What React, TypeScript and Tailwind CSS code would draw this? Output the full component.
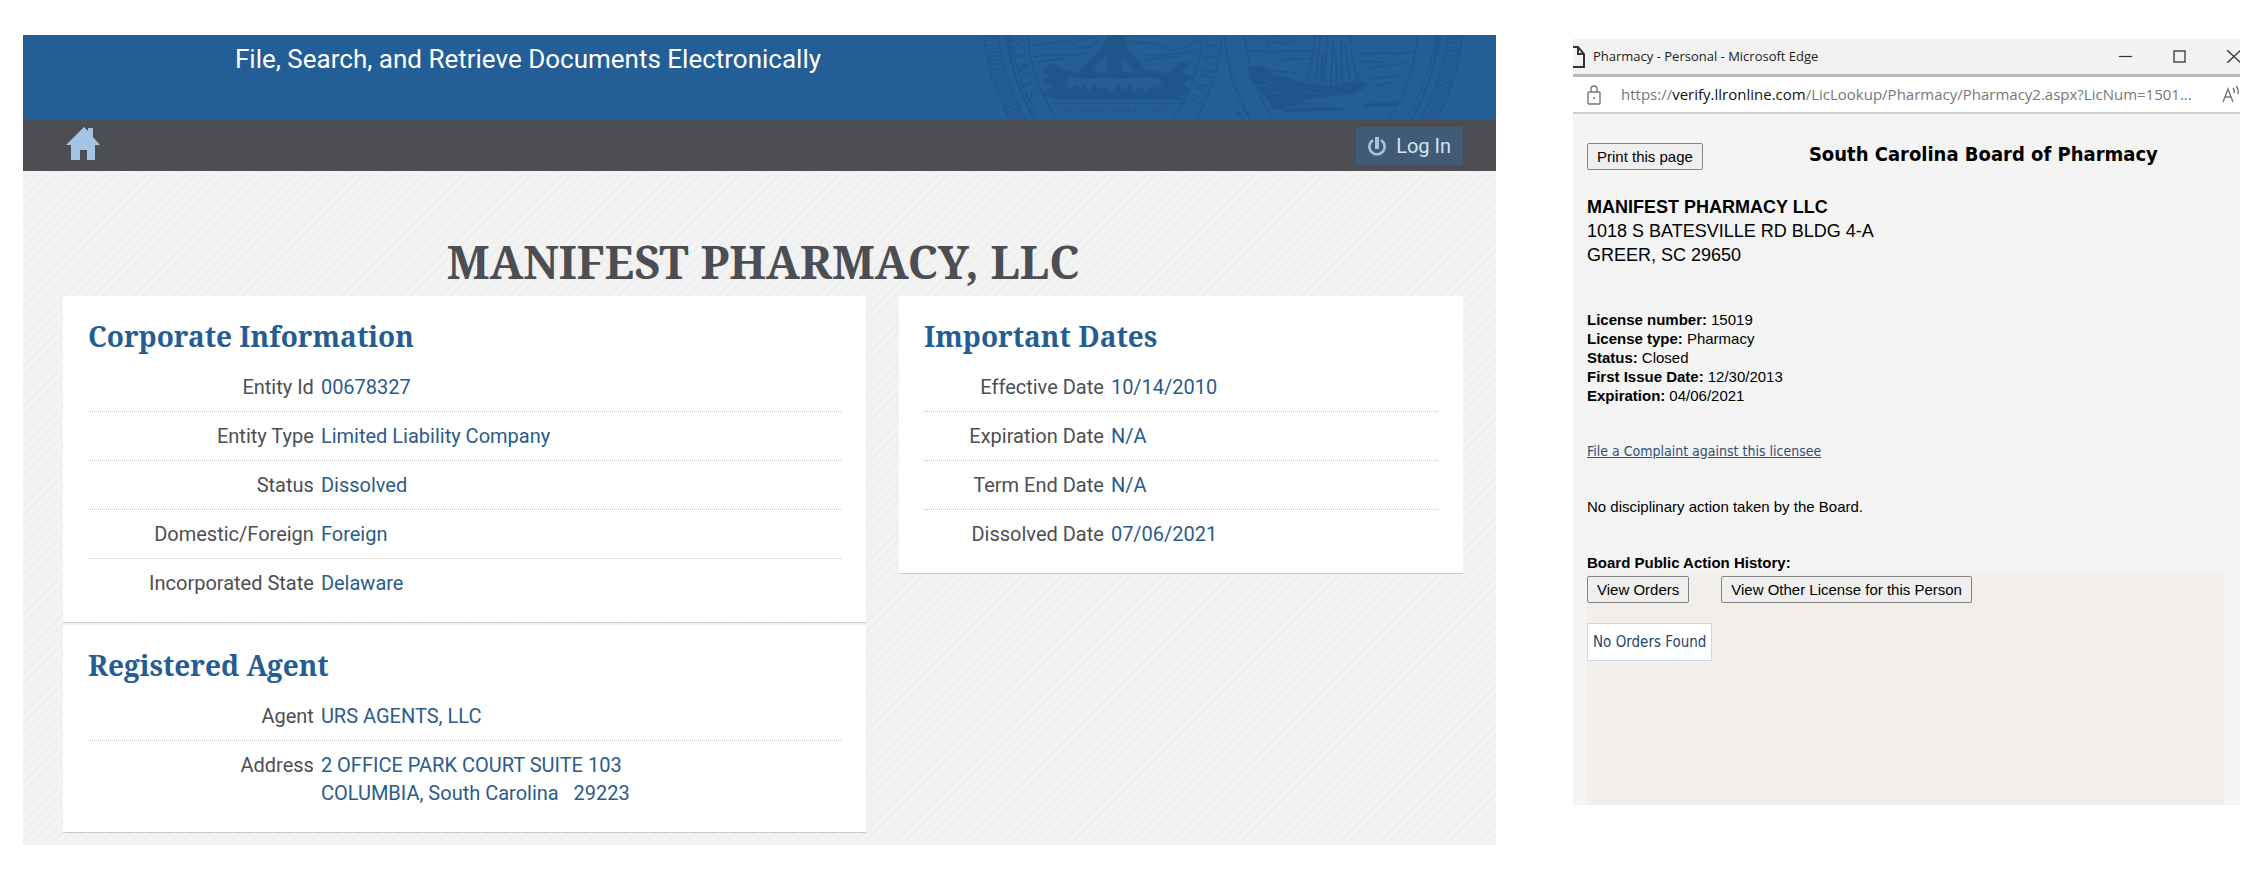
type Field = { label: string; lines: string[] }

const corporateInfo: Field[] = [
  { label: "Entity Id", lines: ["00678327"] },
  { label: "Entity Type", lines: ["Limited Liability Company"] },
  { label: "Status", lines: ["Dissolved"] },
  { label: "Domestic/Foreign", lines: ["Foreign"] },
  { label: "Incorporated State", lines: ["Delaware"] },
]

const registeredAgent: Field[] = [
  { label: "Agent", lines: ["URS AGENTS, LLC"] },
  { label: "Address", lines: ["2 OFFICE PARK COURT SUITE 103", "COLUMBIA, South Carolina \u00a0 29223"] },
]

const importantDates: Field[] = [
  { label: "Effective Date", lines: ["10/14/2010"] },
  { label: "Expiration Date", lines: ["N/A"] },
  { label: "Term End Date", lines: ["N/A"] },
  { label: "Dissolved Date", lines: ["07/06/2021"] },
]

const license = [
  { label: "License number:", value: "15019" },
  { label: "License type:", value: "Pharmacy" },
  { label: "Status:", value: "Closed" },
  { label: "First Issue Date:", value: "12/30/2013" },
  { label: "Expiration:", value: "04/06/2021" },
]

function StateSeal() {
  return (
    <svg viewBox="0 0 486 84" className="absolute right-[30px] top-0 h-[84px] w-[486px]" fill="none" stroke="#1f558a" strokeWidth="1.3" aria-hidden="true">
      {/* outer ring */}
      <circle cx="243" cy="-28" r="241" />
      <circle cx="243" cy="-28" r="234" strokeWidth="11" strokeDasharray="1.5 2.5" opacity="0.75" />
      <circle cx="243" cy="-28" r="227" />
      <circle cx="243" cy="-28" r="219" />
      <circle cx="243" cy="-28" r="215" strokeWidth="1" />

      {/* palmetto oval */}
      <ellipse cx="135" cy="-15" rx="107" ry="150" />
      <ellipse cx="135" cy="-15" rx="88" ry="131" />
      <path id="motto" stroke="none" d="M31 -15 A104 147 0 0 0 239 -15" />
      <g fill="#1f558a" stroke="none" fontFamily="Liberation Serif, serif">
        <text fontSize="17">
          <textPath href="#motto" startOffset="18">N I M I S</textPath>
        </text>
        <text fontSize="17">
          <textPath href="#motto" startOffset="308">P A R A T</textPath>
        </text>
        <text x="135" y="78" fontSize="8" textAnchor="middle">MELIOREM LAPSA LOCAVIT</text>
        <path d="M128 0 L144 0 L148 14 L166 36 L154 37 L143 22 L143 40 L126 40 L127 20 L110 37 L98 37 L121 13 Z" />
        <path d="M62 36 L72 28 L84 34 L98 38 L112 35 L126 39 L142 36 L158 39 L172 35 L188 39 L200 27 L209 28 L201 38 L214 42 L203 49 L212 55 L201 61 L203 65 L76 65 L62 59 L72 52 L60 47 L70 42 Z M90 42 L86 48 L90 54 L96 50 L100 55 L105 49 L109 56 L114 50 L120 55 L126 51 L132 57 L138 50 L143 56 L149 50 L154 56 L160 51 L166 56 L172 50 L178 54 L182 48 L178 43 L160 42 L146 44 L128 42 L108 44 Z" fillRule="evenodd" />
      </g>
      <path d="M52 10 C68 13 78 1 94 9 S112 10 118 6 M54 22 C76 16 88 24 108 18 M58 27 L86 23 M150 5 C164 12 172 4 184 12 S206 12 218 4 M160 18 C180 26 196 14 216 18 M166 25 L198 21 M70 68 H206" />
      <path d="M144 1 L178 1 M146 5 L160 9 M96 5 L117 2" />

      {/* woman with laurel oval */}
      <ellipse cx="351" cy="-15" rx="107" ry="150" />
      <ellipse cx="351" cy="-15" rx="87" ry="131" />
      <g fill="#1f558a" stroke="none">
        <path d="M267 32 L282 31 L293 40 L310 43 L328 49 L350 52 L374 45 L389 50 L376 58 L346 62 L318 66 L336 69 L306 72 L294 75 L284 60 L272 47 Z" />
        <path d="M385 69 L416 66 L421 70 L402 72 L382 72 Z" />
        <path d="M300 73 L366 72 L360 76 L304 77 Z" />
      </g>
      <path fill="#245e96" d="M334 0 C334 18 331 34 327 45 L340 50 L354 52 L368 48 L379 46 C374 34 370 18 371 0 Z" />
      <path d="M340 0 L336 44 M347 1 L344 47 M353 8 L351 50 M361 6 L362 48 M365 8 L370 44 M343 18 L341 44 M356 20 L357 50" strokeWidth="2" />
      <path d="M267 8 C270 1 282 0 289 8 L289 14 M268 16 H332 M286 19 L302 17 M300 26 C312 20 322 28 332 22 M276 34 L318 38 M290 7 C300 5 306 14 314 4 M292 0 L308 8 M376 18 C388 22 400 15 412 18 S428 15 434 16 M378 29 C390 22 398 31 406 26 M384 34 L424 28 M390 44 L422 40 M396 51 L414 47" />
      <path d="M280 43 L296 50 M276 50 L292 52 M288 60 L304 56 M306 52 L318 58 M322 56 L340 59" stroke="#245e96" />
      <path d="M263 74 L270 84 M257 76 L264 84" strokeWidth="2" />
    </svg>
  )
}

function HomeIcon() {
  return (
    <svg viewBox="0 0 34 33" className="h-[33px] w-[34px]" fill="#a3c4e3" aria-hidden="true">
      <path d="M0 18 L18 0 L22 4 V1 H27 V10 L34 18 H29 V33 H21 V23 H14 V33 H5 V18 Z" />
    </svg>
  )
}

function PowerIcon() {
  return (
    <svg viewBox="0 0 18 19" className="h-[19px] w-[18px]" fill="none" stroke="#a3c4e3" aria-hidden="true">
      <path d="M5 3.2 A7.6 7.6 0 1 0 13 3.2" strokeWidth="2.6" />
      <path d="M9 0 V12" strokeWidth="4" />
    </svg>
  )
}

function InfoCard({ title, fields, wide = false }: { title: string; fields: Field[]; wide?: boolean }) {
  return (
    <section className="border-b border-[#c9c9c9] bg-white px-[25px] pt-5 pb-[15px]">
      <h2 className="mb-[7px] font-['Noto_Serif',serif] text-[28px] leading-10 font-bold text-[#255d93]">{title}</h2>
      <dl>
        {fields.map((field) => (
          <div key={field.label} className="flex gap-[7px] border-b border-dotted border-[#c4c4c4] py-[10px] text-xl leading-7 last:border-b-0">
            <dt className={wide ? "w-[30%] shrink-0 text-right text-[#4d4e53]" : "w-[35%] shrink-0 text-right text-[#4d4e53]"}>{field.label}</dt>
            <dd className="text-[#2b5b8a]">
              {field.lines.map((line) => (
                <span key={line} className="block">{line}</span>
              ))}
            </dd>
          </div>
        ))}
      </dl>
    </section>
  )
}

function FilingPanel() {
  return (
    <div className="self-start font-['Roboto',sans-serif]">
      <header className="relative overflow-hidden bg-[#245e96] pt-[6px] pb-[43px] pl-[212px]">
        <StateSeal />
        <p className="relative text-[26px] leading-9 text-white">File, Search, and Retrieve Documents Electronically</p>
      </header>
      <nav className="flex items-start justify-between bg-[#4d4e53] pt-[7px] pr-[33px] pb-[6px] pl-[43px]">
        <a href="#home" aria-label="Home"><HomeIcon /></a>
        <button className="flex h-[38px] items-center gap-[10px] bg-[#415b76] px-3 text-xl text-[#d3e3f2]">
          <PowerIcon />
          Log In
        </button>
      </nav>
      <main className="bg-[repeating-linear-gradient(135deg,#f3f3f3_0px,#f3f3f3_4px,#eeeeee_5px,#eeeeee_6px,#f3f3f3_7px)] pt-[57px] pr-[33px] pb-3 pl-10">
        <h1 className="text-center font-['Noto_Serif',serif] text-[45px] leading-[68px] font-bold text-[#4d4e53]">MANIFEST PHARMACY, LLC</h1>
        <div className="grid grid-cols-[803fr_564fr] items-start gap-[33px]">
          <div className="flex flex-col gap-[2px]">
            <InfoCard title="Corporate Information" fields={corporateInfo} wide />
            <InfoCard title="Registered Agent" fields={registeredAgent} wide />
          </div>
          <InfoCard title="Important Dates" fields={importantDates} />
        </div>
      </main>
    </div>
  )
}

function TitleBar() {
  return (
    <div className="flex h-[38px] items-center overflow-hidden border-b-[3px] border-[#bababa] bg-[#f2f2f2]">
      <svg viewBox="0 0 12 22" className="h-[22px] w-3" fill="none" stroke="#333" strokeWidth="2" aria-hidden="true">
        <path d="M0 1 H5 L11 8 V21 H0 M5 1 V8 H11" />
      </svg>
      <p className="ml-2 grow font-['Open_Sans',sans-serif] text-[13px] text-[#222]">Pharmacy - Personal - Microsoft Edge</p>
      <div className="flex items-center gap-[41px]">
        <button aria-label="Minimize">
          <svg viewBox="0 0 13 13" className="size-[13px]" stroke="#333" strokeWidth="1.2" aria-hidden="true"><path d="M0 6.5 H13" /></svg>
        </button>
        <button aria-label="Maximize">
          <svg viewBox="0 0 13 13" className="size-[13px]" fill="none" stroke="#333" strokeWidth="1.3" aria-hidden="true"><rect x="1" y="1" width="11" height="11" /></svg>
        </button>
        <button aria-label="Close">
          <svg viewBox="0 0 13 13" className="size-[13px]" stroke="#333" strokeWidth="1.3" aria-hidden="true"><path d="M0 0 L14 13 M14 0 L0 13" /></svg>
        </button>
      </div>
    </div>
  )
}

function AddressBar() {
  return (
    <div className="flex h-[37px] items-center overflow-hidden border-b-2 border-[#cfcfcf] bg-white pl-[14px] text-[#777]">
      <svg viewBox="0 0 14 20" className="h-5 w-[14px] shrink-0" fill="none" stroke="#777" strokeWidth="1.4" aria-hidden="true">
        <rect x="1" y="7" width="12" height="12" rx="1" />
        <path d="M4 7 V4 A3 3 0 0 1 10 4 V7" />
        <circle cx="7" cy="13" r="1" fill="#777" stroke="none" />
      </svg>
      <p className="ml-5 grow font-['Open_Sans',sans-serif] text-[15px] whitespace-nowrap">
        https://<span className="text-[#111]">verify.llronline.com</span>/LicLookup/Pharmacy/Pharmacy2.aspx?LicNum=1501...
      </p>
      <svg viewBox="0 0 18 20" className="h-5 w-[18px] shrink-0" fill="none" stroke="#777" strokeWidth="1.4" aria-hidden="true">
        <path d="M1 17 L6 4 L11 17 M3 12 H9 M11 3 Q13 5 12 8 M14 1 Q17 4 16 9" />
      </svg>
    </div>
  )
}

function LicenseWindow() {
  const plainButton = "rounded-[2px] border border-[#858585] bg-[#efefef] px-[9px] leading-[25px]"

  return (
    <div className="mt-1 self-start bg-[#f4f4f4] font-['Liberation_Sans',Arial,sans-serif] text-[15px] text-black">
      <TitleBar />
      <AddressBar />
      <div className="pt-[29px] pr-4 pl-[14px]">
        <div className="flex items-start gap-[106px]">
          <button className={plainButton}>Print this page</button>
          <h2 className="font-['DejaVu_Sans_Condensed','DejaVu_Sans',sans-serif] text-xl leading-[22px] font-bold">South Carolina Board of Pharmacy</h2>
        </div>
        <address className="mt-[25px] text-lg leading-6 not-italic">
          <strong className="block">MANIFEST PHARMACY LLC</strong>
          1018 S BATESVILLE RD BLDG 4-A<br />
          GREER, SC 29650
        </address>
        <dl className="mt-[43px] leading-[19px]">
          {license.map((item) => (
            <div key={item.label} className="flex gap-1">
              <dt className="font-bold">{item.label}</dt>
              <dd>{item.value}</dd>
            </div>
          ))}
        </dl>
        <p className="mt-9 leading-5">
          <a href="#complaint" className="font-['DejaVu_Sans_Condensed','DejaVu_Sans',sans-serif] text-sm text-[#2f5070] underline">File a Complaint against this licensee</a>
        </p>
        <p className="mt-9 leading-5">No disciplinary action taken by the Board.</p>
        <h3 className="mt-9 leading-5 font-bold">Board Public Action History:</h3>
        <div className="bg-[#f2efea] pt-[3px] pb-36">
          <div className="flex gap-8">
            <button className={plainButton}>View Orders</button>
            <button className={plainButton}>View Other License for this Person</button>
          </div>
          <p className="mt-5 w-fit border border-[#ccd6e6] bg-white px-[5px] font-['DejaVu_Sans_Condensed','DejaVu_Sans',sans-serif] text-[15px] leading-9 text-[#24466b]">No Orders Found</p>
        </div>
      </div>
    </div>
  )
}

export default function App() {
  return (
    <div className="grid min-h-screen grid-cols-[1473fr_667fr] gap-[77px] bg-white pt-[35px] pr-[27px] pb-6 pl-[23px]">
      <FilingPanel />
      <LicenseWindow />
    </div>
  )
}
